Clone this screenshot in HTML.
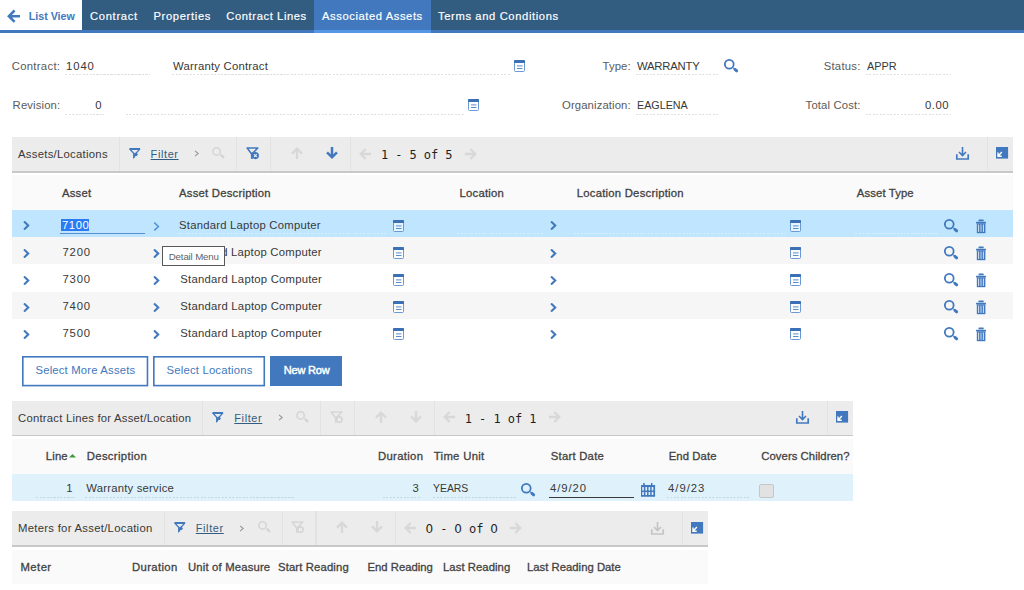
<!DOCTYPE html>
<html lang="en"><head><meta charset="utf-8"><title>Warranty Contract - Associated Assets</title><style>
html,body{margin:0;padding:0;background:#fff;}
body{width:1024px;height:590px;position:relative;overflow:hidden;font-family:"Liberation Sans",sans-serif;}
body>div,body>svg,body>span{position:absolute;box-sizing:border-box;}
svg{overflow:visible;}
.t{line-height:16px;white-space:pre;}
.b{font-weight:bold;}
.nb{-webkit-text-stroke:0.45px currentColor;}
.z{font-style:normal;font-family:"DejaVu Sans",sans-serif;display:inline-block;width:7.22px;text-align:center;letter-spacing:0;text-indent:-0.3px;}
.m{-webkit-text-stroke:0.18px currentColor;}
.h{-webkit-text-stroke:0.3px currentColor;}
</style></head><body>
<div style="left:0px;top:0px;width:1024px;height:30px;background:#325c80;"></div>
<div style="left:0px;top:29.8px;width:1024px;height:3px;background:#4178be;"></div>
<div style="left:0px;top:0px;width:82px;height:30px;background:#fff;"></div>
<div style="left:314px;top:0px;width:116.6px;height:30px;background:#4178be;"></div>
<div style="left:314px;top:29.8px;width:116.6px;height:3px;background:#5596e6;"></div>
<svg style="left:7px;top:9px;" width="14" height="14" viewBox="0 0 14 14"><path d="M13 7.2 H2 M7.6 1.5 L1.9 7.2 L7.6 12.9" fill="none" stroke="#4178be" stroke-width="2.6" stroke-linejoin="miter"/></svg>
<span class="t b" style="left:28.8px;top:7.99px;font-size:10.7px;color:#4178be;letter-spacing:-0.016px;">List View</span>
<span class="t m" style="left:90px;top:8.32px;font-size:11.2px;color:#fff;letter-spacing:0.69px;">Contract</span>
<span class="t m" style="left:153.4px;top:8.32px;font-size:11.2px;color:#fff;letter-spacing:0.67px;">Properties</span>
<span class="t m" style="left:226.3px;top:8.32px;font-size:11.2px;color:#fff;letter-spacing:0.597px;">Contract Lines</span>
<span class="t m" style="left:322px;top:8.32px;font-size:11.2px;color:#fff;letter-spacing:0.588px;">Associated Assets</span>
<span class="t m" style="left:438px;top:8.32px;font-size:11.2px;color:#fff;letter-spacing:0.63px;">Terms and Conditions</span>
<span class="t " style="left:11.7px;top:58.08px;font-size:11.3px;color:#5a5a5a;letter-spacing:0.306px;">Contract:</span>
<span class="t " style="left:66px;top:58.08px;font-size:11.3px;color:#383838;letter-spacing:0.915px;">1040</span>
<div style="left:65px;top:74px;width:85px;height:1px;background:repeating-linear-gradient(90deg,#dfdfdf 0,#dfdfdf 2px,transparent 2px,transparent 3.5px);"></div>
<span class="t " style="left:173px;top:58.08px;font-size:11.3px;color:#383838;letter-spacing:0.226px;">Warranty Contract</span>
<div style="left:172px;top:74px;width:337.5px;height:1px;background:repeating-linear-gradient(90deg,#dfdfdf 0,#dfdfdf 2px,transparent 2px,transparent 3.5px);"></div>
<svg style="left:514px;top:59.5px;" width="11" height="12" viewBox="0 0 11 12"><rect x="0.5" y="0.5" width="10" height="11" rx="1" fill="rgba(255,255,255,0.55)" stroke="#6c99d3"/><rect x="0" y="0" width="11" height="3" rx="0.8" fill="#3b6fb6"/><rect x="3" y="5.4" width="5.5" height="1" fill="#5b8dcc"/><rect x="3" y="8" width="5.5" height="1" fill="#5b8dcc"/></svg>
<span class="t " style="left:602.5px;top:58.08px;font-size:11.3px;color:#5a5a5a;letter-spacing:0.132px;">Type:</span>
<span class="t " style="left:637px;top:58.08px;font-size:11.3px;color:#383838;letter-spacing:-0.211px;">WARRANTY</span>
<div style="left:636px;top:74px;width:84px;height:1px;background:repeating-linear-gradient(90deg,#dfdfdf 0,#dfdfdf 2px,transparent 2px,transparent 3.5px);"></div>
<svg style="left:723.6px;top:58.7px;" width="15" height="14" viewBox="0 0 15 14"><g opacity="1"><circle cx="5.25" cy="5.3" r="4.4" fill="none" stroke="#4178be" stroke-width="1.8"/><path d="M10.9 10.3 L12.7 11.9" stroke="#4178be" stroke-width="2.9" stroke-linecap="round"/><path d="M8.5 8.3 L10.9 10.3" stroke="#4178be" stroke-width="1"/></g></svg>
<span class="t " style="left:823.7px;top:58.08px;font-size:11.3px;color:#5a5a5a;letter-spacing:0.247px;">Status:</span>
<span class="t " style="left:866.5px;top:58.08px;font-size:11.3px;color:#383838;letter-spacing:0px;transform:scaleX(0.9621);transform-origin:0 0;">APPR</span>
<div style="left:865.5px;top:74px;width:85.5px;height:1px;background:repeating-linear-gradient(90deg,#dfdfdf 0,#dfdfdf 2px,transparent 2px,transparent 3.5px);"></div>
<span class="t " style="left:12.6px;top:97.08px;font-size:11.3px;color:#5a5a5a;letter-spacing:0.137px;">Revision:</span>
<span class="t " style="left:95.3px;top:97.08px;font-size:11.3px;color:#383838;letter-spacing:1.203px;">0</span>
<div style="left:65px;top:113.5px;width:39px;height:1px;background:repeating-linear-gradient(90deg,#dfdfdf 0,#dfdfdf 2px,transparent 2px,transparent 3.5px);"></div>
<div style="left:126px;top:113.5px;width:337.5px;height:1px;background:repeating-linear-gradient(90deg,#dfdfdf 0,#dfdfdf 2px,transparent 2px,transparent 3.5px);"></div>
<svg style="left:468.3px;top:98.8px;" width="11" height="12" viewBox="0 0 11 12"><rect x="0.5" y="0.5" width="10" height="11" rx="1" fill="rgba(255,255,255,0.55)" stroke="#6c99d3"/><rect x="0" y="0" width="11" height="3" rx="0.8" fill="#3b6fb6"/><rect x="3" y="5.4" width="5.5" height="1" fill="#5b8dcc"/><rect x="3" y="8" width="5.5" height="1" fill="#5b8dcc"/></svg>
<span class="t " style="left:562px;top:97.08px;font-size:11.3px;color:#5a5a5a;letter-spacing:0.123px;">Organization:</span>
<span class="t " style="left:637px;top:97.08px;font-size:11.3px;color:#383838;letter-spacing:0px;transform:scaleX(0.9518);transform-origin:0 0;">EAGLENA</span>
<div style="left:636px;top:113.5px;width:84px;height:1px;background:repeating-linear-gradient(90deg,#dfdfdf 0,#dfdfdf 2px,transparent 2px,transparent 3.5px);"></div>
<span class="t " style="left:805.6px;top:97.08px;font-size:11.3px;color:#5a5a5a;letter-spacing:0.148px;">Total Cost:</span>
<span class="t " style="left:925px;top:97.08px;font-size:11.3px;color:#383838;letter-spacing:0.5px;">0.00</span>
<div style="left:865.5px;top:113.5px;width:85.5px;height:1px;background:repeating-linear-gradient(90deg,#dfdfdf 0,#dfdfdf 2px,transparent 2px,transparent 3.5px);"></div>
<div style="left:12.3px;top:137px;width:1000.7px;height:34px;background:#ececec;"></div>
<div style="left:12.3px;top:171px;width:1000.7px;height:1.6px;background:#c8c8c8;"></div>
<div style="left:119.1px;top:137px;width:1.2px;height:34px;background:#e2e2e2;"></div>
<div style="left:236.2px;top:137px;width:1.2px;height:34px;background:#e2e2e2;"></div>
<div style="left:270.0px;top:137px;width:1.2px;height:34px;background:#e2e2e2;"></div>
<div style="left:350.1px;top:137px;width:1.2px;height:34px;background:#e2e2e2;"></div>
<div style="left:987.0px;top:137px;width:1.2px;height:34px;background:#e2e2e2;"></div>
<span class="t " style="left:18px;top:146.08px;font-size:11.3px;color:#383838;letter-spacing:0.275px;">Assets/Locations</span>
<svg style="left:128.5px;top:148px;" width="12" height="12" viewBox="0 0 12 12"><path d="M0.5 1 H11.1" stroke="#4178be" stroke-width="2" fill="none"/><path d="M1.1 1.4 L4.9 5.6 V9.2 M10.5 1.4 L7.4 4.9" stroke="#4178be" stroke-width="1.4" fill="none" stroke-linecap="round"/><path d="M4.6 5.4 L7.3 4.6 L9 6.5 L7.7 8 L6.6 7.9 L4.5 10.8 L4.1 10.4 Z" fill="#4178be"/></svg>
<span class="t " style="left:150.6px;top:145.72px;font-size:10.9px;color:#325c80;letter-spacing:0.633px;text-decoration:underline;text-decoration-thickness:0.9px;text-underline-offset:1.2px;">Filter</span>
<svg style="left:193.6px;top:150.3px;" width="6" height="7" viewBox="0 0 6 7"><path d="M1 0.9 L4.2 3.5 L1 6.1" fill="none" stroke="#96968c" stroke-width="1.05"/></svg>
<svg style="left:212.4px;top:147.2px;" width="13" height="12" viewBox="0 0 13 12"><circle cx="4.6" cy="4.4" r="3.7" fill="none" stroke="#d5d5d5" stroke-width="1.6"/><path d="M9.4 8.4 L11.3 10.2" stroke="#d5d5d5" stroke-width="2.5" stroke-linecap="round"/></svg>
<svg style="left:245.5px;top:146.9px;" width="14" height="13" viewBox="0 0 14 13"><path d="M1.2 1 H11.8 L6.6 6.4 H5.1 Z" fill="none" stroke="#4178be" stroke-width="1.6" stroke-linejoin="round"/><rect x="4.9" y="5.8" width="1.9" height="6.1" fill="#4178be"/><circle cx="9.4" cy="8.6" r="3.55" fill="#4178be"/><path d="M8.1 7.3 L10.7 9.9 M10.7 7.3 L8.1 9.9" stroke="#f3f6fa" stroke-width="1.15"/></svg>
<svg style="left:291px;top:147.2px;" width="12" height="12" viewBox="0 0 12 12"><g transform="rotate(0 6 6)"><path d="M6 12.1 V1.8 M1.05 6.65 L6 1.7 L10.95 6.65" fill="none" stroke="#d8d8d8" stroke-width="2.3" stroke-linejoin="miter"/></g></svg>
<svg style="left:326px;top:147.1px;" width="12" height="12" viewBox="0 0 12 12"><g transform="rotate(180 6 6)"><path d="M6 12.1 V1.8 M1.05 6.65 L6 1.7 L10.95 6.65" fill="none" stroke="#4178be" stroke-width="2.5" stroke-linejoin="miter"/></g></svg>
<svg style="left:359px;top:147.6px;" width="12" height="12" viewBox="0 0 12 12"><g transform="rotate(270 6 6)"><path d="M6 12.1 V1.8 M1.05 6.65 L6 1.7 L10.95 6.65" fill="none" stroke="#d8d8d8" stroke-width="2.3" stroke-linejoin="miter"/></g></svg>
<span class="t " style="left:381px;top:146.74px;font-size:12px;color:#1f1f1f;letter-spacing:-0.085px;font-family:'DejaVu Sans Mono','Liberation Mono',monospace;">1 - 5 of 5</span>
<svg style="left:465px;top:147.6px;" width="12" height="12" viewBox="0 0 12 12"><g transform="rotate(90 6 6)"><path d="M6 12.1 V1.8 M1.05 6.65 L6 1.7 L10.95 6.65" fill="none" stroke="#d8d8d8" stroke-width="2.3" stroke-linejoin="miter"/></g></svg>
<svg style="left:956.2px;top:147.3px;" width="13" height="13" viewBox="0 0 13 13"><path d="M6.5 0 V8.3 M3 5 L6.5 8.5 L10 5" fill="none" stroke="#4178be" stroke-width="1.6"/><path d="M0.8 7.2 V12 H12.2 V7.2" fill="none" stroke="#4178be" stroke-width="1.7"/></svg>
<svg style="left:996.2px;top:147.4px;" width="12.1" height="11.6" viewBox="0 0 12.1 11.6"><rect width="12.1" height="11.6" fill="#4178be"/><path d="M5.9 5 L2.4 8.7 M2 5.4 V9.2 H5.7" fill="none" stroke="#fff" stroke-width="1.4"/></svg>
<div style="left:12.3px;top:175.2px;width:1000.7px;height:34.9px;background:#fafafa;"></div>
<span class="t h" style="left:62px;top:185.08px;font-size:11.3px;color:#424242;letter-spacing:0.207px;">Asset</span>
<span class="t h" style="left:179px;top:185.08px;font-size:11.3px;color:#424242;letter-spacing:0.229px;">Asset Description</span>
<span class="t h" style="left:459.5px;top:185.08px;font-size:11.3px;color:#424242;letter-spacing:0.229px;">Location</span>
<span class="t h" style="left:576.75px;top:185.08px;font-size:11.3px;color:#424242;letter-spacing:0.235px;">Location Description</span>
<span class="t h" style="left:856.75px;top:185.08px;font-size:11.3px;color:#424242;letter-spacing:0.136px;">Asset Type</span>
<div style="left:12.3px;top:210.1px;width:1000.7px;height:27.200000000000017px;background:#c0e6ff;"></div>
<svg style="left:23.2px;top:220.45px;" width="8" height="11" viewBox="0 0 8 11"><path d="M1.6 2.1 L5.2 5.5 L1.6 8.9" fill="none" stroke="#4178be" stroke-width="2.1" stroke-linejoin="miter" stroke-linecap="round"/></svg>
<div style="left:61px;top:219px;width:28.2px;height:11.5px;background:#2a7bf4;"></div>
<span class="t " style="left:62px;top:217.38px;font-size:11.3px;color:#fff;letter-spacing:0.54px;">7100</span>
<div style="left:60.4px;top:233px;width:84.6px;height:1px;background:#5a8ed0;"></div>
<div style="left:178px;top:233.3px;width:209px;height:1px;background:repeating-linear-gradient(90deg,#d6efff 0,#d6efff 2px,transparent 2px,transparent 3.5px);"></div>
<div style="left:456.7px;top:233.3px;width:86.3px;height:1px;background:repeating-linear-gradient(90deg,#d6efff 0,#d6efff 2px,transparent 2px,transparent 3.5px);"></div>
<div style="left:574px;top:233.3px;width:211px;height:1px;background:repeating-linear-gradient(90deg,#d6efff 0,#d6efff 2px,transparent 2px,transparent 3.5px);"></div>
<div style="left:855px;top:233.3px;width:83px;height:1px;background:repeating-linear-gradient(90deg,#d6efff 0,#d6efff 2px,transparent 2px,transparent 3.5px);"></div>
<svg style="left:152.8px;top:220.64999999999998px;" width="8" height="11" viewBox="0 0 8 11"><path d="M1.3 1.6 L5.4 5.5 L1.3 9.4" fill="none" stroke="#4f8fdc" stroke-width="1.5"/></svg>
<span class="t " style="left:179px;top:217.38px;font-size:11.3px;color:#383838;letter-spacing:0.23px;">Standard Laptop Computer</span>
<svg style="left:393.1px;top:219.6px;" width="11" height="12" viewBox="0 0 11 12"><rect x="0.5" y="0.5" width="10" height="11" rx="1" fill="rgba(255,255,255,0.55)" stroke="#6c99d3"/><rect x="0" y="0" width="11" height="3" rx="0.8" fill="#3b6fb6"/><rect x="3" y="5.4" width="5.5" height="1" fill="#5b8dcc"/><rect x="3" y="8" width="5.5" height="1" fill="#5b8dcc"/></svg>
<svg style="left:549.8px;top:220.45px;" width="8" height="11" viewBox="0 0 8 11"><path d="M1.6 2.1 L5.2 5.5 L1.6 8.9" fill="none" stroke="#4178be" stroke-width="2.1" stroke-linejoin="miter" stroke-linecap="round"/></svg>
<svg style="left:790.4px;top:219.6px;" width="11" height="12" viewBox="0 0 11 12"><rect x="0.5" y="0.5" width="10" height="11" rx="1" fill="rgba(255,255,255,0.55)" stroke="#6c99d3"/><rect x="0" y="0" width="11" height="3" rx="0.8" fill="#3b6fb6"/><rect x="3" y="5.4" width="5.5" height="1" fill="#5b8dcc"/><rect x="3" y="8" width="5.5" height="1" fill="#5b8dcc"/></svg>
<svg style="left:943.6px;top:218.75px;" width="15" height="14" viewBox="0 0 15 14"><g opacity="1"><circle cx="5.25" cy="5.3" r="4.4" fill="none" stroke="#4178be" stroke-width="1.8"/><path d="M10.9 10.3 L12.7 11.9" stroke="#4178be" stroke-width="2.9" stroke-linecap="round"/><path d="M8.5 8.3 L10.9 10.3" stroke="#4178be" stroke-width="1"/></g></svg>
<svg style="left:975.9px;top:218.85px;" width="10" height="15" viewBox="0 0 10 15"><rect x="2.5" y="0.6" width="5.2" height="1.7" rx="0.6" fill="#4178be"/><rect x="0" y="2.8" width="10" height="1.7" rx="0.4" fill="#4178be"/><path d="M0.8 4.4 H9.4 V14.2 H0.8 Z" fill="#4178be"/><rect x="2.2" y="5.5" width="0.9" height="7.4" fill="#eaf2fb"/><rect x="6.9" y="5.5" width="0.9" height="7.4" fill="#eaf2fb"/><rect x="4" y="5.5" width="2" height="7.4" fill="#86aada"/></svg>
<div style="left:12.3px;top:237.3px;width:1000.7px;height:27.19999999999999px;background:#f6f6f6;"></div>
<svg style="left:23.2px;top:247.58999999999997px;" width="8" height="11" viewBox="0 0 8 11"><path d="M1.6 2.1 L5.2 5.5 L1.6 8.9" fill="none" stroke="#4178be" stroke-width="2.1" stroke-linejoin="miter" stroke-linecap="round"/></svg>
<span class="t " style="left:62.5px;top:244.38px;font-size:11.3px;color:#383838;letter-spacing:0.79px;">7200</span>
<svg style="left:152.7px;top:247.58999999999997px;" width="8" height="11" viewBox="0 0 8 11"><path d="M1.6 2.1 L5.2 5.5 L1.6 8.9" fill="none" stroke="#4178be" stroke-width="2.1" stroke-linejoin="miter" stroke-linecap="round"/></svg>
<span class="t " style="left:180px;top:244.38px;font-size:11.3px;color:#383838;letter-spacing:0.23px;">Standard Laptop Computer</span>
<svg style="left:393.1px;top:246.73999999999998px;" width="11" height="12" viewBox="0 0 11 12"><rect x="0.5" y="0.5" width="10" height="11" rx="1" fill="rgba(255,255,255,0.55)" stroke="#6c99d3"/><rect x="0" y="0" width="11" height="3" rx="0.8" fill="#3b6fb6"/><rect x="3" y="5.4" width="5.5" height="1" fill="#5b8dcc"/><rect x="3" y="8" width="5.5" height="1" fill="#5b8dcc"/></svg>
<svg style="left:549.8px;top:247.58999999999997px;" width="8" height="11" viewBox="0 0 8 11"><path d="M1.6 2.1 L5.2 5.5 L1.6 8.9" fill="none" stroke="#4178be" stroke-width="2.1" stroke-linejoin="miter" stroke-linecap="round"/></svg>
<svg style="left:790.4px;top:246.73999999999998px;" width="11" height="12" viewBox="0 0 11 12"><rect x="0.5" y="0.5" width="10" height="11" rx="1" fill="rgba(255,255,255,0.55)" stroke="#6c99d3"/><rect x="0" y="0" width="11" height="3" rx="0.8" fill="#3b6fb6"/><rect x="3" y="5.4" width="5.5" height="1" fill="#5b8dcc"/><rect x="3" y="8" width="5.5" height="1" fill="#5b8dcc"/></svg>
<svg style="left:943.6px;top:245.89px;" width="15" height="14" viewBox="0 0 15 14"><g opacity="1"><circle cx="5.25" cy="5.3" r="4.4" fill="none" stroke="#4178be" stroke-width="1.8"/><path d="M10.9 10.3 L12.7 11.9" stroke="#4178be" stroke-width="2.9" stroke-linecap="round"/><path d="M8.5 8.3 L10.9 10.3" stroke="#4178be" stroke-width="1"/></g></svg>
<svg style="left:975.9px;top:245.98999999999998px;" width="10" height="15" viewBox="0 0 10 15"><rect x="2.5" y="0.6" width="5.2" height="1.7" rx="0.6" fill="#4178be"/><rect x="0" y="2.8" width="10" height="1.7" rx="0.4" fill="#4178be"/><path d="M0.8 4.4 H9.4 V14.2 H0.8 Z" fill="#4178be"/><rect x="2.2" y="5.5" width="0.9" height="7.4" fill="#eaf2fb"/><rect x="6.9" y="5.5" width="0.9" height="7.4" fill="#eaf2fb"/><rect x="4" y="5.5" width="2" height="7.4" fill="#86aada"/></svg>
<div style="left:12.3px;top:264.5px;width:1000.7px;height:27.5px;background:#ffffff;"></div>
<svg style="left:23.2px;top:274.73px;" width="8" height="11" viewBox="0 0 8 11"><path d="M1.6 2.1 L5.2 5.5 L1.6 8.9" fill="none" stroke="#4178be" stroke-width="2.1" stroke-linejoin="miter" stroke-linecap="round"/></svg>
<span class="t " style="left:62.5px;top:271.38px;font-size:11.3px;color:#383838;letter-spacing:0.79px;">7300</span>
<svg style="left:152.7px;top:274.73px;" width="8" height="11" viewBox="0 0 8 11"><path d="M1.6 2.1 L5.2 5.5 L1.6 8.9" fill="none" stroke="#4178be" stroke-width="2.1" stroke-linejoin="miter" stroke-linecap="round"/></svg>
<span class="t " style="left:180.3px;top:271.38px;font-size:11.3px;color:#383838;letter-spacing:0.23px;">Standard Laptop Computer</span>
<svg style="left:393.1px;top:273.88px;" width="11" height="12" viewBox="0 0 11 12"><rect x="0.5" y="0.5" width="10" height="11" rx="1" fill="rgba(255,255,255,0.55)" stroke="#6c99d3"/><rect x="0" y="0" width="11" height="3" rx="0.8" fill="#3b6fb6"/><rect x="3" y="5.4" width="5.5" height="1" fill="#5b8dcc"/><rect x="3" y="8" width="5.5" height="1" fill="#5b8dcc"/></svg>
<svg style="left:549.8px;top:274.73px;" width="8" height="11" viewBox="0 0 8 11"><path d="M1.6 2.1 L5.2 5.5 L1.6 8.9" fill="none" stroke="#4178be" stroke-width="2.1" stroke-linejoin="miter" stroke-linecap="round"/></svg>
<svg style="left:790.4px;top:273.88px;" width="11" height="12" viewBox="0 0 11 12"><rect x="0.5" y="0.5" width="10" height="11" rx="1" fill="rgba(255,255,255,0.55)" stroke="#6c99d3"/><rect x="0" y="0" width="11" height="3" rx="0.8" fill="#3b6fb6"/><rect x="3" y="5.4" width="5.5" height="1" fill="#5b8dcc"/><rect x="3" y="8" width="5.5" height="1" fill="#5b8dcc"/></svg>
<svg style="left:943.6px;top:273.03000000000003px;" width="15" height="14" viewBox="0 0 15 14"><g opacity="1"><circle cx="5.25" cy="5.3" r="4.4" fill="none" stroke="#4178be" stroke-width="1.8"/><path d="M10.9 10.3 L12.7 11.9" stroke="#4178be" stroke-width="2.9" stroke-linecap="round"/><path d="M8.5 8.3 L10.9 10.3" stroke="#4178be" stroke-width="1"/></g></svg>
<svg style="left:975.9px;top:273.13px;" width="10" height="15" viewBox="0 0 10 15"><rect x="2.5" y="0.6" width="5.2" height="1.7" rx="0.6" fill="#4178be"/><rect x="0" y="2.8" width="10" height="1.7" rx="0.4" fill="#4178be"/><path d="M0.8 4.4 H9.4 V14.2 H0.8 Z" fill="#4178be"/><rect x="2.2" y="5.5" width="0.9" height="7.4" fill="#eaf2fb"/><rect x="6.9" y="5.5" width="0.9" height="7.4" fill="#eaf2fb"/><rect x="4" y="5.5" width="2" height="7.4" fill="#86aada"/></svg>
<div style="left:12.3px;top:292.0px;width:1000.7px;height:27.0px;background:#f6f6f6;"></div>
<svg style="left:23.2px;top:301.87px;" width="8" height="11" viewBox="0 0 8 11"><path d="M1.6 2.1 L5.2 5.5 L1.6 8.9" fill="none" stroke="#4178be" stroke-width="2.1" stroke-linejoin="miter" stroke-linecap="round"/></svg>
<span class="t " style="left:62.5px;top:298.38px;font-size:11.3px;color:#383838;letter-spacing:0.79px;">7400</span>
<svg style="left:152.7px;top:301.87px;" width="8" height="11" viewBox="0 0 8 11"><path d="M1.6 2.1 L5.2 5.5 L1.6 8.9" fill="none" stroke="#4178be" stroke-width="2.1" stroke-linejoin="miter" stroke-linecap="round"/></svg>
<span class="t " style="left:180.3px;top:298.38px;font-size:11.3px;color:#383838;letter-spacing:0.23px;">Standard Laptop Computer</span>
<svg style="left:393.1px;top:301.02px;" width="11" height="12" viewBox="0 0 11 12"><rect x="0.5" y="0.5" width="10" height="11" rx="1" fill="rgba(255,255,255,0.55)" stroke="#6c99d3"/><rect x="0" y="0" width="11" height="3" rx="0.8" fill="#3b6fb6"/><rect x="3" y="5.4" width="5.5" height="1" fill="#5b8dcc"/><rect x="3" y="8" width="5.5" height="1" fill="#5b8dcc"/></svg>
<svg style="left:549.8px;top:301.87px;" width="8" height="11" viewBox="0 0 8 11"><path d="M1.6 2.1 L5.2 5.5 L1.6 8.9" fill="none" stroke="#4178be" stroke-width="2.1" stroke-linejoin="miter" stroke-linecap="round"/></svg>
<svg style="left:790.4px;top:301.02px;" width="11" height="12" viewBox="0 0 11 12"><rect x="0.5" y="0.5" width="10" height="11" rx="1" fill="rgba(255,255,255,0.55)" stroke="#6c99d3"/><rect x="0" y="0" width="11" height="3" rx="0.8" fill="#3b6fb6"/><rect x="3" y="5.4" width="5.5" height="1" fill="#5b8dcc"/><rect x="3" y="8" width="5.5" height="1" fill="#5b8dcc"/></svg>
<svg style="left:943.6px;top:300.17px;" width="15" height="14" viewBox="0 0 15 14"><g opacity="1"><circle cx="5.25" cy="5.3" r="4.4" fill="none" stroke="#4178be" stroke-width="1.8"/><path d="M10.9 10.3 L12.7 11.9" stroke="#4178be" stroke-width="2.9" stroke-linecap="round"/><path d="M8.5 8.3 L10.9 10.3" stroke="#4178be" stroke-width="1"/></g></svg>
<svg style="left:975.9px;top:300.27px;" width="10" height="15" viewBox="0 0 10 15"><rect x="2.5" y="0.6" width="5.2" height="1.7" rx="0.6" fill="#4178be"/><rect x="0" y="2.8" width="10" height="1.7" rx="0.4" fill="#4178be"/><path d="M0.8 4.4 H9.4 V14.2 H0.8 Z" fill="#4178be"/><rect x="2.2" y="5.5" width="0.9" height="7.4" fill="#eaf2fb"/><rect x="6.9" y="5.5" width="0.9" height="7.4" fill="#eaf2fb"/><rect x="4" y="5.5" width="2" height="7.4" fill="#86aada"/></svg>
<div style="left:12.3px;top:319.0px;width:1000.7px;height:27.100000000000023px;background:#ffffff;"></div>
<svg style="left:23.2px;top:329.01px;" width="8" height="11" viewBox="0 0 8 11"><path d="M1.6 2.1 L5.2 5.5 L1.6 8.9" fill="none" stroke="#4178be" stroke-width="2.1" stroke-linejoin="miter" stroke-linecap="round"/></svg>
<span class="t " style="left:62.5px;top:325.38px;font-size:11.3px;color:#383838;letter-spacing:0.79px;">7500</span>
<svg style="left:152.7px;top:329.01px;" width="8" height="11" viewBox="0 0 8 11"><path d="M1.6 2.1 L5.2 5.5 L1.6 8.9" fill="none" stroke="#4178be" stroke-width="2.1" stroke-linejoin="miter" stroke-linecap="round"/></svg>
<span class="t " style="left:180.3px;top:325.38px;font-size:11.3px;color:#383838;letter-spacing:0.23px;">Standard Laptop Computer</span>
<svg style="left:393.1px;top:328.15999999999997px;" width="11" height="12" viewBox="0 0 11 12"><rect x="0.5" y="0.5" width="10" height="11" rx="1" fill="rgba(255,255,255,0.55)" stroke="#6c99d3"/><rect x="0" y="0" width="11" height="3" rx="0.8" fill="#3b6fb6"/><rect x="3" y="5.4" width="5.5" height="1" fill="#5b8dcc"/><rect x="3" y="8" width="5.5" height="1" fill="#5b8dcc"/></svg>
<svg style="left:549.8px;top:329.01px;" width="8" height="11" viewBox="0 0 8 11"><path d="M1.6 2.1 L5.2 5.5 L1.6 8.9" fill="none" stroke="#4178be" stroke-width="2.1" stroke-linejoin="miter" stroke-linecap="round"/></svg>
<svg style="left:790.4px;top:328.15999999999997px;" width="11" height="12" viewBox="0 0 11 12"><rect x="0.5" y="0.5" width="10" height="11" rx="1" fill="rgba(255,255,255,0.55)" stroke="#6c99d3"/><rect x="0" y="0" width="11" height="3" rx="0.8" fill="#3b6fb6"/><rect x="3" y="5.4" width="5.5" height="1" fill="#5b8dcc"/><rect x="3" y="8" width="5.5" height="1" fill="#5b8dcc"/></svg>
<svg style="left:943.6px;top:327.31px;" width="15" height="14" viewBox="0 0 15 14"><g opacity="1"><circle cx="5.25" cy="5.3" r="4.4" fill="none" stroke="#4178be" stroke-width="1.8"/><path d="M10.9 10.3 L12.7 11.9" stroke="#4178be" stroke-width="2.9" stroke-linecap="round"/><path d="M8.5 8.3 L10.9 10.3" stroke="#4178be" stroke-width="1"/></g></svg>
<svg style="left:975.9px;top:327.40999999999997px;" width="10" height="15" viewBox="0 0 10 15"><rect x="2.5" y="0.6" width="5.2" height="1.7" rx="0.6" fill="#4178be"/><rect x="0" y="2.8" width="10" height="1.7" rx="0.4" fill="#4178be"/><path d="M0.8 4.4 H9.4 V14.2 H0.8 Z" fill="#4178be"/><rect x="2.2" y="5.5" width="0.9" height="7.4" fill="#eaf2fb"/><rect x="6.9" y="5.5" width="0.9" height="7.4" fill="#eaf2fb"/><rect x="4" y="5.5" width="2" height="7.4" fill="#86aada"/></svg>
<div style="left:162px;top:246.3px;width:62.5px;height:19.3px;background:#fff;border:1px solid #585858;"></div>
<span class="t " style="left:168.75px;top:248.64px;font-size:9.7px;color:#636363;letter-spacing:-0.15px;">Detail Menu</span>
<svg style="left:21.8px;top:355.5px;" width="126.3" height="30.4" viewBox="0 0 126.3 30.4"><rect x="0.8" y="0.8" width="124.7" height="28.8" fill="#fff" stroke="#4178be" stroke-width="1.6"/></svg>
<svg style="left:153px;top:355.5px;" width="112.1" height="30.4" viewBox="0 0 112.1 30.4"><rect x="0.8" y="0.8" width="110.5" height="28.8" fill="#fff" stroke="#4178be" stroke-width="1.6"/></svg>
<div style="left:270px;top:356px;width:72px;height:29.8px;background:#4178be;"></div>
<span class="t " style="left:35.5px;top:362.38px;font-size:11.3px;color:#4178be;letter-spacing:0.172px;">Select More Assets</span>
<span class="t " style="left:166.5px;top:362.38px;font-size:11.3px;color:#4178be;letter-spacing:0.196px;">Select Locations</span>
<span class="t nb" style="left:283.75px;top:362.49px;font-size:11px;color:#fff;letter-spacing:-0.183px;">New Row</span>
<div style="left:12.3px;top:400.8px;width:841.0px;height:34px;background:#ececec;"></div>
<div style="left:12.3px;top:434.8px;width:841.0px;height:1.6px;background:#c8c8c8;"></div>
<div style="left:202.1px;top:400.8px;width:1.2px;height:34px;background:#e2e2e2;"></div>
<div style="left:319.6px;top:400.8px;width:1.2px;height:34px;background:#e2e2e2;"></div>
<div style="left:353.90000000000003px;top:400.8px;width:1.2px;height:34px;background:#e2e2e2;"></div>
<div style="left:434.0px;top:400.8px;width:1.2px;height:34px;background:#e2e2e2;"></div>
<div style="left:827.1px;top:400.8px;width:1.2px;height:34px;background:#e2e2e2;"></div>
<span class="t " style="left:18px;top:410.08px;font-size:11.3px;color:#383838;letter-spacing:0.228px;">Contract Lines for Asset/Location</span>
<svg style="left:212px;top:411.8px;" width="12" height="12" viewBox="0 0 12 12"><path d="M0.5 1 H11.1" stroke="#4178be" stroke-width="2" fill="none"/><path d="M1.1 1.4 L4.9 5.6 V9.2 M10.5 1.4 L7.4 4.9" stroke="#4178be" stroke-width="1.4" fill="none" stroke-linecap="round"/><path d="M4.6 5.4 L7.3 4.6 L9 6.5 L7.7 8 L6.6 7.9 L4.5 10.8 L4.1 10.4 Z" fill="#4178be"/></svg>
<span class="t " style="left:234.3px;top:409.72px;font-size:10.9px;color:#325c80;letter-spacing:0.633px;text-decoration:underline;text-decoration-thickness:0.9px;text-underline-offset:1.2px;">Filter</span>
<svg style="left:277.6px;top:414.1px;" width="6" height="7" viewBox="0 0 6 7"><path d="M1 0.9 L4.2 3.5 L1 6.1" fill="none" stroke="#96968c" stroke-width="1.05"/></svg>
<svg style="left:296.4px;top:411.0px;" width="13" height="12" viewBox="0 0 13 12"><circle cx="4.6" cy="4.4" r="3.7" fill="none" stroke="#d5d5d5" stroke-width="1.6"/><path d="M9.4 8.4 L11.3 10.2" stroke="#d5d5d5" stroke-width="2.5" stroke-linecap="round"/></svg>
<svg style="left:329.8px;top:410.7px;" width="14" height="13" viewBox="0 0 14 13"><path d="M1.2 1 H11.8 L6.6 6.4 H5.1 Z" fill="none" stroke="#d6d6d6" stroke-width="1.6" stroke-linejoin="round"/><rect x="4.9" y="5.8" width="1.9" height="6.1" fill="#d6d6d6"/><circle cx="9.4" cy="8.6" r="3.55" fill="#d6d6d6"/><path d="M8.1 7.3 L10.7 9.9 M10.7 7.3 L8.1 9.9" stroke="#f3f6fa" stroke-width="1.15"/></svg>
<svg style="left:375px;top:411.0px;" width="12" height="12" viewBox="0 0 12 12"><g transform="rotate(0 6 6)"><path d="M6 12.1 V1.8 M1.05 6.65 L6 1.7 L10.95 6.65" fill="none" stroke="#d8d8d8" stroke-width="2.3" stroke-linejoin="miter"/></g></svg>
<svg style="left:410px;top:410.90000000000003px;" width="12" height="12" viewBox="0 0 12 12"><g transform="rotate(180 6 6)"><path d="M6 12.1 V1.8 M1.05 6.65 L6 1.7 L10.95 6.65" fill="none" stroke="#d8d8d8" stroke-width="2.3" stroke-linejoin="miter"/></g></svg>
<svg style="left:443px;top:411.40000000000003px;" width="12" height="12" viewBox="0 0 12 12"><g transform="rotate(270 6 6)"><path d="M6 12.1 V1.8 M1.05 6.65 L6 1.7 L10.95 6.65" fill="none" stroke="#d8d8d8" stroke-width="2.3" stroke-linejoin="miter"/></g></svg>
<span class="t " style="left:464.75px;top:410.74px;font-size:12px;color:#1f1f1f;letter-spacing:-0.06px;font-family:'DejaVu Sans Mono','Liberation Mono',monospace;">1 - 1 of 1</span>
<svg style="left:548.5px;top:411.40000000000003px;" width="12" height="12" viewBox="0 0 12 12"><g transform="rotate(90 6 6)"><path d="M6 12.1 V1.8 M1.05 6.65 L6 1.7 L10.95 6.65" fill="none" stroke="#d8d8d8" stroke-width="2.3" stroke-linejoin="miter"/></g></svg>
<svg style="left:796.3px;top:411.1px;" width="13" height="13" viewBox="0 0 13 13"><path d="M6.5 0 V8.3 M3 5 L6.5 8.5 L10 5" fill="none" stroke="#4178be" stroke-width="1.6"/><path d="M0.8 7.2 V12 H12.2 V7.2" fill="none" stroke="#4178be" stroke-width="1.7"/></svg>
<svg style="left:836.4px;top:411.2px;" width="12.1" height="11.6" viewBox="0 0 12.1 11.6"><rect width="12.1" height="11.6" fill="#4178be"/><path d="M5.9 5 L2.4 8.7 M2 5.4 V9.2 H5.7" fill="none" stroke="#fff" stroke-width="1.4"/></svg>
<div style="left:12.3px;top:439px;width:841px;height:35.2px;background:#fafafa;"></div>
<span class="t h" style="left:45.75px;top:448.28px;font-size:11.3px;color:#424242;letter-spacing:0.173px;">Line</span>
<span class="t h" style="left:86.75px;top:448.28px;font-size:11.3px;color:#424242;letter-spacing:0.344px;">Description</span>
<span class="t h" style="left:378px;top:448.28px;font-size:11.3px;color:#424242;letter-spacing:0.325px;">Duration</span>
<span class="t h" style="left:433.75px;top:448.28px;font-size:11.3px;color:#424242;letter-spacing:0.32px;">Time Unit</span>
<span class="t h" style="left:550.75px;top:448.28px;font-size:11.3px;color:#424242;letter-spacing:0.244px;">Start Date</span>
<span class="t h" style="left:668.75px;top:448.28px;font-size:11.3px;color:#424242;letter-spacing:0.086px;">End Date</span>
<span class="t h" style="left:761.25px;top:448.28px;font-size:11.3px;color:#424242;letter-spacing:0.064px;">Covers Children?</span>
<svg style="left:68.7px;top:453.6px;" width="7" height="4" viewBox="0 0 7 4"><path d="M0 3.6 L3.5 0 L7 3.6 Z" fill="#3c9a3c"/></svg>
<div style="left:12.3px;top:474.2px;width:841px;height:27px;background:#dff2fb;"></div>
<span class="t " style="left:66.25px;top:480.08px;font-size:11.3px;color:#383838;letter-spacing:0.753px;">1</span>
<span class="t " style="left:86.25px;top:480.08px;font-size:11.3px;color:#383838;letter-spacing:0.217px;">Warranty service</span>
<span class="t " style="left:412.5px;top:480.08px;font-size:11.3px;color:#383838;letter-spacing:0.753px;">3</span>
<span class="t " style="left:433px;top:480.08px;font-size:11.3px;color:#383838;letter-spacing:0px;transform:scaleX(0.9214);transform-origin:0 0;">YEARS</span>
<span class="t " style="left:550px;top:480.08px;font-size:11.3px;color:#383838;letter-spacing:0.938px;">4/9/20</span>
<span class="t " style="left:668px;top:480.08px;font-size:11.3px;color:#383838;letter-spacing:0.98px;">4/9/23</span>
<div style="left:36.3px;top:497px;width:38.7px;height:1px;background:repeating-linear-gradient(90deg,#c5d8e2 0,#c5d8e2 2px,transparent 2px,transparent 3.5px);"></div>
<div style="left:85px;top:497px;width:210px;height:1px;background:repeating-linear-gradient(90deg,#c5d8e2 0,#c5d8e2 2px,transparent 2px,transparent 3.5px);"></div>
<div style="left:383px;top:497px;width:38.3px;height:1px;background:repeating-linear-gradient(90deg,#c5d8e2 0,#c5d8e2 2px,transparent 2px,transparent 3.5px);"></div>
<div style="left:432.5px;top:497px;width:83.5px;height:1px;background:repeating-linear-gradient(90deg,#c5d8e2 0,#c5d8e2 2px,transparent 2px,transparent 3.5px);"></div>
<div style="left:667px;top:497px;width:84.3px;height:1px;background:repeating-linear-gradient(90deg,#c5d8e2 0,#c5d8e2 2px,transparent 2px,transparent 3.5px);"></div>
<div style="left:549.3px;top:496.6px;width:84.5px;height:1px;background:#3a3a3a;"></div>
<svg style="left:521.2px;top:483px;" width="15" height="14" viewBox="0 0 15 14"><g opacity="1"><circle cx="5.25" cy="5.3" r="4.4" fill="none" stroke="#4178be" stroke-width="1.8"/><path d="M10.9 10.3 L12.7 11.9" stroke="#4178be" stroke-width="2.9" stroke-linecap="round"/><path d="M8.5 8.3 L10.9 10.3" stroke="#4178be" stroke-width="1"/></g></svg>
<svg style="left:640.9px;top:483px;" width="14.1" height="14" viewBox="0 0 14.1 14"><rect x="0" y="1.9" width="14.1" height="11.9" rx="0.5" fill="#4178be"/><rect x="2.2" y="0" width="1.5" height="3" fill="#4178be"/><rect x="9.95" y="0" width="1.5" height="3" fill="#4178be"/><rect x="1.2" y="4.1" width="1.65" height="3.5" rx="0.5" fill="#e3f1fa"/><rect x="4.4" y="4.1" width="1.65" height="3.5" rx="0.5" fill="#e3f1fa"/><rect x="7.55" y="4.1" width="1.65" height="3.5" rx="0.5" fill="#e3f1fa"/><rect x="10.7" y="4.1" width="1.65" height="3.5" rx="0.5" fill="#e3f1fa"/><rect x="1.2" y="9.0" width="1.65" height="3.1" rx="0.5" fill="#e3f1fa"/><rect x="4.4" y="9.0" width="1.65" height="3.1" rx="0.5" fill="#e3f1fa"/><rect x="7.55" y="9.0" width="1.65" height="3.1" rx="0.5" fill="#e3f1fa"/><rect x="10.7" y="9.0" width="1.65" height="3.1" rx="0.5" fill="#e3f1fa"/></svg>
<div style="left:759.4px;top:484px;width:14.3px;height:14.3px;background:#e2e2e2;border:1px solid #c6c6c6;border-radius:2px;"></div>
<div style="left:12.3px;top:511.2px;width:696.0px;height:34px;background:#ececec;"></div>
<div style="left:12.3px;top:545.2px;width:696.0px;height:1.6px;background:#c8c8c8;"></div>
<div style="left:163.9px;top:511.2px;width:1.2px;height:34px;background:#e2e2e2;"></div>
<div style="left:281.6px;top:511.2px;width:1.2px;height:34px;background:#e2e2e2;"></div>
<div style="left:315.40000000000003px;top:511.2px;width:1.2px;height:34px;background:#e2e2e2;"></div>
<div style="left:395.1px;top:511.2px;width:1.2px;height:34px;background:#e2e2e2;"></div>
<div style="left:682.1px;top:511.2px;width:1.2px;height:34px;background:#e2e2e2;"></div>
<span class="t " style="left:18px;top:520.08px;font-size:11.3px;color:#383838;letter-spacing:0.283px;">Meters for Asset/Location</span>
<svg style="left:173.6px;top:522.2px;" width="12" height="12" viewBox="0 0 12 12"><path d="M0.5 1 H11.1" stroke="#4178be" stroke-width="2" fill="none"/><path d="M1.1 1.4 L4.9 5.6 V9.2 M10.5 1.4 L7.4 4.9" stroke="#4178be" stroke-width="1.4" fill="none" stroke-linecap="round"/><path d="M4.6 5.4 L7.3 4.6 L9 6.5 L7.7 8 L6.6 7.9 L4.5 10.8 L4.1 10.4 Z" fill="#4178be"/></svg>
<span class="t " style="left:195.75px;top:519.72px;font-size:10.9px;color:#325c80;letter-spacing:0.633px;text-decoration:underline;text-decoration-thickness:0.9px;text-underline-offset:1.2px;">Filter</span>
<svg style="left:238.8px;top:524.5px;" width="6" height="7" viewBox="0 0 6 7"><path d="M1 0.9 L4.2 3.5 L1 6.1" fill="none" stroke="#96968c" stroke-width="1.05"/></svg>
<svg style="left:257.7px;top:521.4px;" width="13" height="12" viewBox="0 0 13 12"><circle cx="4.6" cy="4.4" r="3.7" fill="none" stroke="#d5d5d5" stroke-width="1.6"/><path d="M9.4 8.4 L11.3 10.2" stroke="#d5d5d5" stroke-width="2.5" stroke-linecap="round"/></svg>
<svg style="left:291px;top:521.1px;" width="14" height="13" viewBox="0 0 14 13"><path d="M1.2 1 H11.8 L6.6 6.4 H5.1 Z" fill="none" stroke="#d6d6d6" stroke-width="1.6" stroke-linejoin="round"/><rect x="4.9" y="5.8" width="1.9" height="6.1" fill="#d6d6d6"/><circle cx="9.4" cy="8.6" r="3.55" fill="#d6d6d6"/><path d="M8.1 7.3 L10.7 9.9 M10.7 7.3 L8.1 9.9" stroke="#f3f6fa" stroke-width="1.15"/></svg>
<svg style="left:336.3px;top:521.4px;" width="12" height="12" viewBox="0 0 12 12"><g transform="rotate(0 6 6)"><path d="M6 12.1 V1.8 M1.05 6.65 L6 1.7 L10.95 6.65" fill="none" stroke="#d8d8d8" stroke-width="2.3" stroke-linejoin="miter"/></g></svg>
<svg style="left:371.3px;top:521.3px;" width="12" height="12" viewBox="0 0 12 12"><g transform="rotate(180 6 6)"><path d="M6 12.1 V1.8 M1.05 6.65 L6 1.7 L10.95 6.65" fill="none" stroke="#d8d8d8" stroke-width="2.3" stroke-linejoin="miter"/></g></svg>
<svg style="left:404.3px;top:521.8px;" width="12" height="12" viewBox="0 0 12 12"><g transform="rotate(270 6 6)"><path d="M6 12.1 V1.8 M1.05 6.65 L6 1.7 L10.95 6.65" fill="none" stroke="#d8d8d8" stroke-width="2.3" stroke-linejoin="miter"/></g></svg>
<span class="t " style="left:425.75px;top:520.74px;font-size:12px;color:#1f1f1f;letter-spacing:-0.035px;font-family:'DejaVu Sans Mono','Liberation Mono',monospace;"><i class="z">0</i> - <i class="z">0</i> of <i class="z">0</i></span>
<svg style="left:510px;top:521.8px;" width="12" height="12" viewBox="0 0 12 12"><g transform="rotate(90 6 6)"><path d="M6 12.1 V1.8 M1.05 6.65 L6 1.7 L10.95 6.65" fill="none" stroke="#d8d8d8" stroke-width="2.3" stroke-linejoin="miter"/></g></svg>
<svg style="left:651.3px;top:521.5px;" width="13" height="13" viewBox="0 0 13 13"><path d="M6.5 0 V8.3 M3 5 L6.5 8.5 L10 5" fill="none" stroke="#c4c4c4" stroke-width="1.6"/><path d="M0.8 7.2 V12 H12.2 V7.2" fill="none" stroke="#c4c4c4" stroke-width="1.7"/></svg>
<svg style="left:691.4px;top:521.6px;" width="12.1" height="11.6" viewBox="0 0 12.1 11.6"><rect width="12.1" height="11.6" fill="#4178be"/><path d="M5.9 5 L2.4 8.7 M2 5.4 V9.2 H5.7" fill="none" stroke="#fff" stroke-width="1.4"/></svg>
<div style="left:12.3px;top:549.5px;width:696px;height:34.5px;background:#fafafa;"></div>
<span class="t h" style="left:20.5px;top:558.88px;font-size:11.3px;color:#424242;letter-spacing:0.432px;">Meter</span>
<span class="t h" style="left:132px;top:558.88px;font-size:11.3px;color:#424242;letter-spacing:0.356px;">Duration</span>
<span class="t h" style="left:188px;top:558.88px;font-size:11.3px;color:#424242;letter-spacing:0.17px;">Unit of Measure</span>
<span class="t h" style="left:278px;top:558.88px;font-size:11.3px;color:#424242;letter-spacing:0.132px;">Start Reading</span>
<span class="t h" style="left:367.5px;top:558.88px;font-size:11.3px;color:#424242;letter-spacing:-0.003px;">End Reading</span>
<span class="t h" style="left:443px;top:558.88px;font-size:11.3px;color:#424242;letter-spacing:0.06px;">Last Reading</span>
<span class="t h" style="left:527px;top:558.88px;font-size:11.3px;color:#424242;letter-spacing:0.013px;">Last Reading Date</span>
</body></html>
